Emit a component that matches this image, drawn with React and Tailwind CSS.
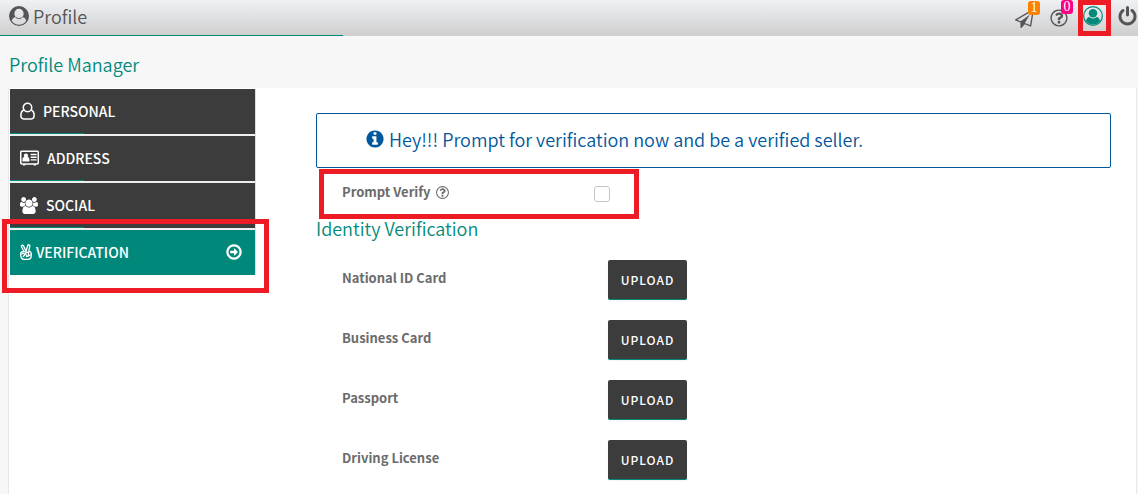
import { useState } from 'react';

const CIRCLE = 'M1664 896q0 209-103 385.5t-279.5 279.5-385.5 103-385.5-103-279.5-279.5-103-385.5 103-385.5 279.5-279.5 385.5-103 385.5 103 279.5 279.5 103 385.5z';

const icons = {
  plane: 'M1764 11q33 24 27 64l-256 1536q-5 29-32 45-14 8-31 8-11 0-24-5l-527-215-298 327q-18 21-47 21-14 0-23-4-19-7-30-23.5t-11-36.5v-452l-472-193q-37-14-40-55-3-39 32-59l1664-960q35-21 68 2zm-342 1499l221-1323-1434 827 336 137 863-639-478 797z',
  question: 'M1008 1200v160q0 14-9 23t-23 9h-160q-14 0-23-9t-9-23v-160q0-14 9-23t23-9h160q14 0 23 9t9 23zm256-496q0 50-15 90t-45.5 69-52 44-59.5 36q-32 18-46.5 28t-26 24-11.5 29v32q0 14-9 23t-23 9h-160q-14 0-23-9t-9-23v-68q0-35 10.5-64.5t24-47.5 39-35.5 41-25.5 44.5-21q53-25 75-43t22-49q0-42-43.5-71.5t-95.5-29.5q-56 0-95 27-29 20-80 83-9 12-25 12-11 0-19-6l-108-82q-10-7-12-20t5-23q122-192 349-192 129 0 238.5 89.5t109.5 214.5zm-368-448q-130 0-248.5 51t-204 136.500-136.500 204-51 248.500 51 248.500 136.500 204 204 136.500 248.500 51 248.500-51 204-136.500 136.500-204 51-248.500-51-248.500-136.500-204-204-136.500-248.500-51z' + CIRCLE,
  power: 'M1664 896q0 156-61 298t-164 245-245 164-298 61-298-61-245-164-164-245-61-298q0-182 80.5-343t226.5-270q43-32 95.5-25t83.5 50q32 42 24.5 94.5t-49.5 84.5q-98 74-151.5 181t-53.5 228q0 104 40.5 198.5t109.5 163.5 163.5 109.5 198.5 40.5 198.5-40.5 163.5-109.5 109.5-163.5 40.5-198.5q0-121-53.5-228t-151.5-181q-42-32-49.5-84.5t24.5-94.5q31-43 84-50t95 25q146 109 226.5 270t80.5 343zm-640-768v640q0 52-38 90t-90 38-90-38-38-90v-640q0-52 38-90t90-38 90 38 38 90z',
  info: 'M1152 1376v-160q0-14-9-23t-23-9h-96v-512q0-14-9-23t-23-9h-320q-14 0-23 9t-9 23v160q0 14 9 23t23 9h96v320h-96q-14 0-23 9t-9 23v160q0 14 9 23t23 9h448q14 0 23-9t9-23zm-128-896v-160q0-14-9-23t-23-9h-192q-14 0-23 9t-9 23v160q0 14 9 23t23 9h192q14 0 23-9t9-23z' + CIRCLE,
  arrow: 'M1285 896q0 14-9 23l-320 320q-9 9-23 9-13 0-22.5-9.5t-9.5-22.5v-192h-352q-13 0-22.5-9.5t-9.5-22.5v-192q0-13 9.5-22.5t22.5-9.5h352v-192q0-14 9-23t23-9q12 0 24 10l319 319q9 9 9 23zm155 0q0-148-73-273t-198-198-273-73-273 73-198 198-73 273 73 273 198 198 273 73 273-73 198-198 73-273z' + CIRCLE,
  users: 'M593 896q-162 5-265 128h-134q-82 0-138-40.5t-56-118.5q0-353 124-353 6 0 43.5 21t97.5 42.5 119 21.5q67 0 133-23-5 37-5 66 0 139 81 256zm1071 637q0 120-73 189.5t-194 69.5h-874q-121 0-194-69.5t-73-189.5q0-53 3.5-103.5t14-109 26.5-108.5 43-97.5 62-81 85.5-53.5 111.5-20q10 0 43 21.5t73 48 107 48 135 21.5 135-21.5 107-48 73-48 43-21.5q61 0 111.5 20t85.5 53.5 62 81 43 97.5 26.5 108.5 14 109 3.5 103.5zm-1024-1277q0 106-75 181t-181 75-181-75-75-181 75-181 181-75 181 75 75 181zm704 384q0 159-112.5 271.5t-271.5 112.5-271.5-112.5-112.5-271.5 112.5-271.5 271.5-112.5 271.5 112.5 112.5 271.5zm576 225q0 78-56 118.5t-138 40.5h-134q-103-123-265-128 81-117 81-256 0-29-5-66 66 23 133 23 59 0 119-21.5t97.5-42.5 43.5-21q124 0 124 353zm-128-609q0 106-75 181t-181 75-181-75-75-181 75-181 181-75 181 75 75 181z',
};

function Icon({ name, className, viewBox = '0 0 1792 1792' }) {
  return (
    <svg viewBox={viewBox} className={className} fill="currentColor" fillRule="evenodd" aria-hidden="true">
      <path d={icons[name]} />
    </svg>
  );
}

// Solid disc with the person cut out of it
function UserCircle({ className }) {
  return (
    <svg viewBox="0 0 28 28" className={className} fill="currentColor" fillRule="evenodd" aria-hidden="true">
      <path d="M14 0a14 14 0 1 1 0 28a14 14 0 1 1 0-28zM14 4a6.5 6.5 0 0 0-6.500 6.500c0 2 .7 3.700 1.800 4.900C6.300 15.800 4.400 18 3.900 20.700a12 12 0 0 0 20.200 0C23.600 18 21.700 15.800 18.700 15.400c1.100-1.200 1.800-2.900 1.800-4.900A6.500 6.500 0 0 0 14 4z" />
      <path d="M9.300 15.400c1.200 1.500 2.800 2.300 4.700 2.300s3.500-.8 4.700-2.300" fill="none" stroke="currentColor" strokeWidth="1.300" />
    </svg>
  );
}

// Ring with the person filled in
function UserCircleOutline({ className }) {
  return (
    <svg viewBox="0 0 28 28" className={className} fill="currentColor" aria-hidden="true">
      <circle cx="14" cy="14" r="13.100" fill="none" stroke="currentColor" strokeWidth="1.700" />
      <circle cx="14" cy="10.200" r="5.900" />
      <path d="M23.800 21c-.35-2.400-1.400-4-4.300-5.900-1.500 1.500-3.400 2.400-5.500 2.400s-4-.9-5.500-2.400c-2.900 1.900-3.950 3.500-4.300 5.900a12 12 0 0 0 19.600 0z" />
    </svg>
  );
}

function UserOutline() {
  return (
    <svg viewBox="0 0 24 28" className="h-[18px] w-[15px]" fill="none" stroke="currentColor" strokeWidth="2.400" aria-hidden="true">
      <circle cx="12" cy="8.500" r="6.800" />
      <path d="M6 12.300C3 13.500 1.400 17 1.400 21.300c0 3 1.800 5.300 4.400 5.300h12.400c2.600 0 4.400-2.300 4.400-5.300 0-4.300-1.600-7.800-4.600-9" />
    </svg>
  );
}

function AddressCard() {
  return (
    <svg viewBox="0 0 32 26" className="h-[16px] w-[19px]" fill="currentColor" aria-hidden="true">
      <rect x="1.200" y="1.500" width="29.600" height="21.500" rx="2" fill="none" stroke="currentColor" strokeWidth="2.600" />
      <circle cx="10" cy="9" r="3.600" />
      <path d="M4 17.500c0-3.800 1-6 3.200-6h5.600c2.200 0 3.200 2.400 3.200 6 0 1.100-.7 1.500-1.500 1.500h-9c-.8 0-1.500-.4-1.500-1.500z" />
      <path d="M18 6h10v2.400H18zM18 10.500h10v2.400H18zM18 15h10v2.400H18zM5 23h4v2.500H5zM23 23h4v2.500h-4z" />
    </svg>
  );
}

// Victory hand: two raised fingers over a closed palm
function HandPeace() {
  return (
    <svg viewBox="0 0 24 32" className="h-[16px] w-[12px]" fill="none" stroke="currentColor" strokeWidth="2.600" strokeLinecap="round" strokeLinejoin="round" aria-hidden="true">
      <path d="M8 15L3 5.500c-.9-2.500 2.600-4.300 4-1.800l5 10.800M12 14.500L15.500 3c.9-2.600 4.700-1.600 4.200 1L17.500 15c3.200-.4 5 1.500 5 4v4.500c0 4.500-3 7.300-7 7.300H9c-4.500 0-7-2.800-7.400-7L1.200 20c-.2-2.500 1-4 3.500-4.500L8 15" />
      <path d="M3 20l4-1.500 3 2.500-3.500 4M10 21l3-4.500 4 .5v5M13 22v3l4-1 5-3M8 15l5 2" />
    </svg>
  );
}

const tabs = [
  { label: 'PERSONAL', icon: <UserOutline />, gap: 'gap-2' },
  { label: 'ADDRESS', icon: <AddressCard />, gap: 'gap-2' },
  { label: 'SOCIAL', icon: <Icon name="users" viewBox="0 0 1920 1792" className="h-[17px] w-[18px]" />, gap: 'gap-2' },
  { label: 'VERIFICATION', icon: <HandPeace />, gap: 'gap-1' },
];

const documents = ['National ID Card', 'Business Card', 'Passport', 'Driving License'];

// Red frame that calls out the element it sits in
function Callout({ className }) {
  return <span className={`pointer-events-none absolute z-10 border-5 border-[#ed1c24] ${className}`} />;
}

function Header() {
  return (
    <header className="relative flex h-9 items-center justify-between bg-linear-to-b from-[#eff1f5] to-[#cecece] pl-[9px] text-[#555]">
      <h1 className="flex h-8 items-center gap-1 self-start text-[18px] leading-6 font-[350]">
        <UserCircle className="size-5" />
        Profile
      </h1>
      <nav className="flex h-full items-center">
        <a href="#messages" aria-label="Messages" className="relative mr-[15px]">
          <Icon name="plane" className="size-[19px]" />
          <span className="absolute -top-2 left-[13px] h-[14px] w-3 rounded-[3px] bg-[#ff7f00] text-center font-['Liberation_Serif',serif] text-[14px] leading-[14px] text-white">1</span>
        </a>
        <a href="#help" aria-label="Help" className="relative mr-[9px]">
          <Icon name="question" className="size-5" />
          <span className="absolute -top-2 left-3 h-[14px] w-3 rounded-[3px] bg-[#ff0084] text-center font-['Liberation_Serif',serif] text-[14px] leading-[14px] text-white">0</span>
        </a>
        <a href="#profile" aria-label="Profile" className="relative flex h-full w-[33px] items-center pb-1 pl-[5px] text-[#00897b]">
          <UserCircleOutline className="size-5" />
          <Callout className="inset-0" />
        </a>
        <a href="#logout" aria-label="Log out" className="ml-[6px] pb-1">
          <Icon name="power" className="size-[21px]" />
        </a>
      </nav>
      <div className="absolute bottom-0 left-0 h-px w-[343px] bg-[#00897b]" />
    </header>
  );
}

function Sidebar({ active, onSelect }) {
  return (
    <nav className="flex w-[246px] shrink-0 flex-col gap-[2px] self-start border-r border-[#ddd] bg-[#eee]">
      {tabs.map(({ label, icon, gap }) => (
        <div key={label} className="relative">
          <button
            type="button"
            onClick={() => onSelect(label)}
            className={`flex h-[45px] w-full items-center pr-3 pb-px pl-[10px] text-[14px] leading-5 font-medium text-white ${gap} ${active === label ? 'bg-[#00897b]' : 'bg-[#3c3c3c]'}`}
          >
            {icon}
            {label}
            {active === label && <Icon name="arrow" className="ml-auto size-[18px]" />}
          </button>
          {active !== label && <div className="absolute bottom-0 left-0 h-px w-[74px] bg-[#00897b]" />}
          {label === 'VERIFICATION' && <Callout className="-top-[11px] -right-[14px] -bottom-[18px] -left-2" />}
        </div>
      ))}
    </nav>
  );
}

export default function App() {
  const [active, setActive] = useState('VERIFICATION');
  const [prompt, setPrompt] = useState(false);

  return (
    <div className="flex min-h-screen flex-col bg-[#f7f7f7] font-['Noto_Sans_CJK_SC',sans-serif]">
      <Header />
      <h2 className="px-[9px] pt-4 pb-3 text-[18px] leading-6 font-[350] text-[#00897b]">Profile Manager</h2>

      <div className="mr-px ml-2 flex flex-1 border-x border-[#e8e8e8] bg-white pt-px pl-px">
        <Sidebar active={active} onSelect={setActive} />

        <main className="flex-1 pt-6 pr-[25px] pl-[60px]">
          <div className="flex h-[55px] items-center gap-1 rounded-[2px] border border-[#01579b] pb-1 pl-12 text-[18px] leading-6 font-[350] text-[#01579b]">
            <Icon name="info" className="size-[20px]" />
            Hey!!! Prompt for verification now and be a verified seller.
          </div>

          <div className="relative flex h-12 items-center pl-[26px] text-[#6b6b6b]">
            <label htmlFor="prompt-verify" className="flex w-[252px] items-center gap-1 text-[13px] leading-5 font-bold">
              Prompt Verify
              <Icon name="question" className="size-[15px]" />
            </label>
            <input
              id="prompt-verify"
              type="checkbox"
              checked={prompt}
              onChange={(e) => setPrompt(e.target.checked)}
              className="mt-1 size-4 appearance-none rounded-[3px] border border-[#c4c4c4] bg-white checked:bg-[#00897b]"
            />
            <Callout className="top-px -bottom-[3px] left-[3px] w-[320px]" />
          </div>

          <h3 className="text-[18px] leading-6 font-[350] text-[#00897b]">Identity Verification</h3>

          <div className="flex flex-col gap-5 pt-5 pl-[26px]">
            {documents.map((name) => (
              <div key={name} className="flex items-start text-[#6b6b6b]">
                <span className="w-[266px] pt-2 text-[13px] leading-5 font-bold">{name}</span>
                <button
                  type="button"
                  aria-label={`Upload ${name}`}
                  className="h-10 w-[79px] rounded-[2px] border-b border-[#00897b] bg-[#3c3c3c] text-[12px] leading-5 font-medium tracking-[1px] text-white shadow-xs"
                >
                  UPLOAD
                </button>
              </div>
            ))}
          </div>
        </main>
      </div>
    </div>
  );
}
